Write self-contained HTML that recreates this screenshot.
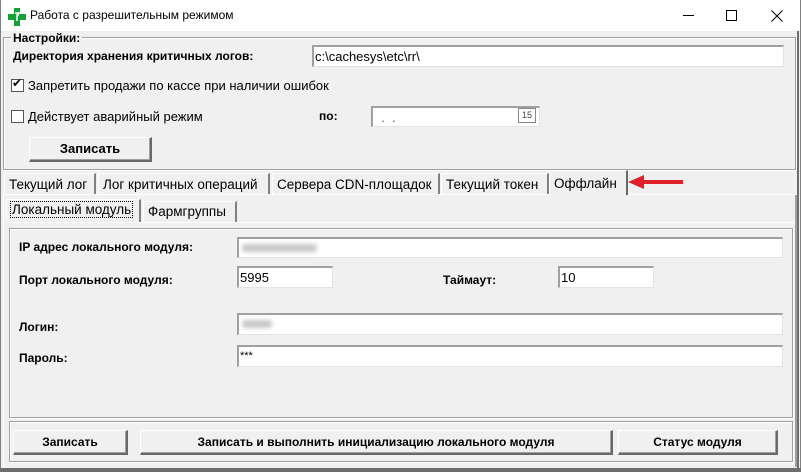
<!DOCTYPE html>
<html><head><meta charset="utf-8"><style>
*{box-sizing:border-box;margin:0;padding:0}
body{width:801px;height:472px;background:#f0f0f0;position:relative;overflow:hidden;font-family:"Liberation Sans","DejaVu Sans",sans-serif;font-size:12px;color:#000}
.a{position:absolute;white-space:nowrap}
.b{font-weight:bold}
.inp{position:absolute;background:#fff;border-top:2px solid #a0a0a0;border-left:2px solid #a0a0a0;border-right:1px solid #e3e3e3;border-bottom:1px solid #e3e3e3;padding:2px 1px;font-size:13px;line-height:15px}
.btn{position:absolute;background:#f0f0f0;border-top:1px solid #fff;border-left:1px solid #fff;border-right:2px solid #696969;border-bottom:2px solid #696969;box-shadow:inset -1px -1px 0 #a0a0a0;text-align:center;font-weight:bold;font-size:12px;white-space:nowrap}
.frame{position:absolute;border:1px solid #a0a0a0;box-shadow:1px 1px 0 #fff, inset 1px 1px 0 #fff}
.tab{position:absolute;height:21px;top:173px;font-size:13.5px;padding:3px 0 0 4px;border-left:1px solid #fff;border-top:1px solid #fff;border-right:2px solid #808080;background:#f0f0f0;white-space:nowrap;overflow:hidden}
.cb{position:absolute;width:13px;height:13px;background:#fff;border:1px solid #555}
.blur{position:absolute;height:8px;background:#c8c8c8;filter:blur(2px);border-radius:3px}
</style></head><body>
<div class="a" style="left:0;top:0;width:801px;height:31px;background:#fff"></div>
<div class="a" style="left:0;top:0;width:1px;height:472px;background:#808080"></div>
<div class="a" style="left:800px;top:0;width:1px;height:472px;background:#808080"></div>
<div class="a" style="left:797px;top:31px;width:2px;height:440px;background:#6d6d6d"></div>
<div class="a" style="left:0;top:468px;width:801px;height:4px;background:#6d6d6d"></div>
<svg class="a" style="left:8px;top:8px" width="18" height="18" viewBox="0 0 18 18"><path d="M6 0h6v6h6v6h-6v6h-6v-6h-6v-6h6z" fill="#18a038"/><path d="M7 5h4l-1 2h-1v6" stroke="#fff" stroke-width="1.5" fill="none"/></svg>
<div class="a" style="left:30px;top:8px;font-size:12px">Работа с разрешительным режимом</div>
<div class="a" style="left:683px;top:15px;width:11px;height:1px;background:#000"></div>
<div class="a" style="left:726px;top:10px;width:11px;height:11px;border:1px solid #000"></div>
<svg class="a" style="left:771px;top:10px" width="12" height="12"><path d="M0.5 0.5L11.5 11.5M11.5 0.5L0.5 11.5" stroke="#000"/></svg>

<div class="frame" style="left:3px;top:37px;width:793px;height:133px"></div>
<div class="a b" style="left:11px;top:31px;background:#f0f0f0;padding:0 2px;font-size:12px">Настройки:</div>
<div class="a b" style="left:13px;top:49px">Директория хранения критичных логов:</div>
<div class="inp" style="left:312px;top:45px;width:472px;height:22px">c:\cachesys\etc\rr\</div>
<div class="cb" style="left:11px;top:79px"></div>
<div class="a" style="left:12px;top:76px;font-size:12px">✔</div>
<div class="a" style="left:28px;top:78px;font-size:13px">Запретить продажи по кассе при наличии ошибок</div>
<div class="cb" style="left:11px;top:110px"></div>
<div class="a" style="left:28px;top:109px;font-size:13px">Действует аварийный режим</div>
<div class="a b" style="left:319px;top:109px">по:</div>
<div class="inp" style="left:371px;top:106px;width:169px;height:21px;color:#3060b0">&nbsp;&nbsp;.&nbsp;&nbsp;.</div>
<div class="a" style="left:518px;top:108px;width:18px;height:15px;border:1px solid #888;font-size:9px;text-align:center;line-height:13px;color:#444">15</div>
<div class="btn" style="left:29px;top:137px;width:123px;height:25px;line-height:22px;font-size:13px">Записать</div>

<div class="a" style="left:3px;top:194px;width:793px;height:1px;background:#fff"></div>
<div class="tab" style="left:4px;width:92px">Текущий лог</div>
<div class="tab" style="left:98px;width:172px">Лог критичных операций</div>
<div class="tab" style="left:272px;width:168px">Сервера CDN-площадок</div>
<div class="tab" style="left:441px;width:108px">Текущий токен</div>
<div class="tab" style="left:549px;width:79px;top:170px;height:25px;border-right:2px solid #696969;padding-top:5px">Оффлайн</div>
<svg class="a" style="left:626px;top:173px" width="60" height="18"><path d="M2 9L18 2V7H57V11H18V16Z" fill="#e0202a"/></svg>
<div class="a" style="left:3px;top:195px;width:1px;height:272px;background:#fff"></div>
<div class="a" style="left:795px;top:195px;width:2px;height:272px;background:#a0a0a0"></div>

<div class="tab" style="left:6px;top:199px;width:135px;height:23px;padding:2px 0 0 3px"><span style="border:1px dotted #000;padding:0 1px">Локальный модуль</span></div>
<div class="tab" style="left:143px;top:201px;width:94px;padding-top:2px">Фармгруппы</div>
<div class="a" style="left:8px;top:222px;width:787px;height:1px;background:#fff"></div>
<div class="frame" style="left:9px;top:228px;width:784px;height:190px"></div>
<div class="a b" style="left:19px;top:240px">IP адрес локального модуля:</div>
<div class="inp" style="left:237px;top:237px;width:546px;height:21px"></div>
<div class="blur" style="left:242px;top:244px;width:75px"></div>
<div class="a b" style="left:19px;top:273px">Порт локального модуля:</div>
<div class="inp" style="left:237px;top:266px;width:96px;height:22px">5995</div>
<div class="a b" style="left:443px;top:273px">Таймаут:</div>
<div class="inp" style="left:558px;top:266px;width:96px;height:22px">10</div>
<div class="a b" style="left:19px;top:320px">Логин:</div>
<div class="inp" style="left:237px;top:313px;width:546px;height:22px"></div>
<div class="blur" style="left:242px;top:320px;width:30px"></div>
<div class="a b" style="left:19px;top:351px">Пароль:</div>
<div class="inp" style="left:237px;top:345px;width:546px;height:22px;font-size:11px">***</div>

<div class="frame" style="left:9px;top:421px;width:784px;height:41px"></div>
<div class="btn" style="left:13px;top:430px;width:115px;height:25px;line-height:22px">Записать</div>
<div class="btn" style="left:140px;top:430px;width:473px;height:25px;line-height:22px">Записать и выполнить инициализацию локального модуля</div>
<div class="btn" style="left:618px;top:430px;width:160px;height:25px;line-height:22px">Статус модуля</div>
</body></html>
